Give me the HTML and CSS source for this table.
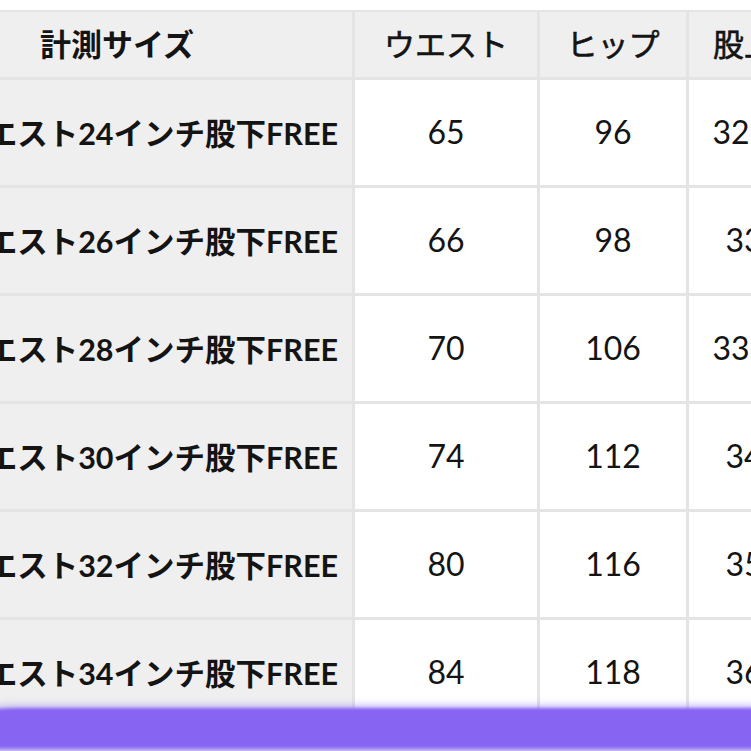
FILE: index.html
```html
<!DOCTYPE html>
<html lang="ja">
<head>
<meta charset="utf-8">
<link rel="stylesheet" href="styles.css">
</head>
<body>
<div class="viewport">
  <div class="sheet">
    <div class="cell head first">計測サイズ</div>
    <div class="cell head">ウエスト</div>
    <div class="cell head">ヒップ</div>
    <div class="cell head">股上</div>

    <div class="cell label">ウエスト24インチ股下FREE</div>
    <div class="cell">65</div><div class="cell">96</div><div class="cell">32.5</div>

    <div class="cell label">ウエスト26インチ股下FREE</div>
    <div class="cell">66</div><div class="cell">98</div><div class="cell">33</div>

    <div class="cell label">ウエスト28インチ股下FREE</div>
    <div class="cell">70</div><div class="cell">106</div><div class="cell">33.5</div>

    <div class="cell label">ウエスト30インチ股下FREE</div>
    <div class="cell">74</div><div class="cell">112</div><div class="cell">34</div>

    <div class="cell label">ウエスト32インチ股下FREE</div>
    <div class="cell">80</div><div class="cell">116</div><div class="cell">35</div>

    <div class="cell label">ウエスト34インチ股下FREE</div>
    <div class="cell">84</div><div class="cell">118</div><div class="cell">36</div>
  </div>
  <div class="swipe"></div>
</div>
</body>
</html>
```

FILE: styles.css
```css
html, body {
  margin: 0;
  padding: 0;
  background: #ffffff;
}

.viewport {
  position: relative;
  width: 751px;
  height: 751px;
  overflow: hidden;
  padding-top: 10px;
  box-sizing: border-box;
}

.sheet {
  display: grid;
  grid-template-columns: 502px 182px 146px 110px;
  grid-template-rows: 65px repeat(6, 105px);
  gap: 3px;
  padding-top: 2px;
  margin-left: -150px;
  width: max-content;
  background: #e4e4e4;
  font-family: "Lato", "Noto Sans CJK JP", sans-serif;
  color: #141414;
}

.cell {
  background: #ffffff;
  display: flex;
  align-items: center;
  justify-content: center;
  font-size: 32px;
  font-weight: 400;
  white-space: nowrap;
  overflow: hidden;
  padding-bottom: 2px;
  box-sizing: border-box;
}

.head {
  background: #efefef;
  font-size: 31px;
  font-weight: 400;
  -webkit-text-stroke: 0.6px #141414;
  padding-bottom: 4px;
}

.head.first {
  justify-content: flex-start;
  padding-left: 190px;
  font-weight: 700;
  -webkit-text-stroke: 0;
}

.label {
  background: #efefef;
  justify-content: flex-end;
  padding-right: 14px;
  font-size: 30.5px;
  font-weight: 700;
}

.swipe {
  position: absolute;
  left: -40px;
  right: -40px;
  top: 708px;
  height: 40px;
  background: #8764f2;
  border-radius: 60px 40px 0 0 / 14px 8px 0 0;
  filter: blur(1.5px);
  box-shadow: 0 -3px 6px rgba(150, 120, 245, 0.5);
}

.swipe::after {
  content: "";
  position: absolute;
  left: 0;
  right: 0;
  bottom: -4px;
  height: 4px;
  background: #b8a6ee;
}
```
